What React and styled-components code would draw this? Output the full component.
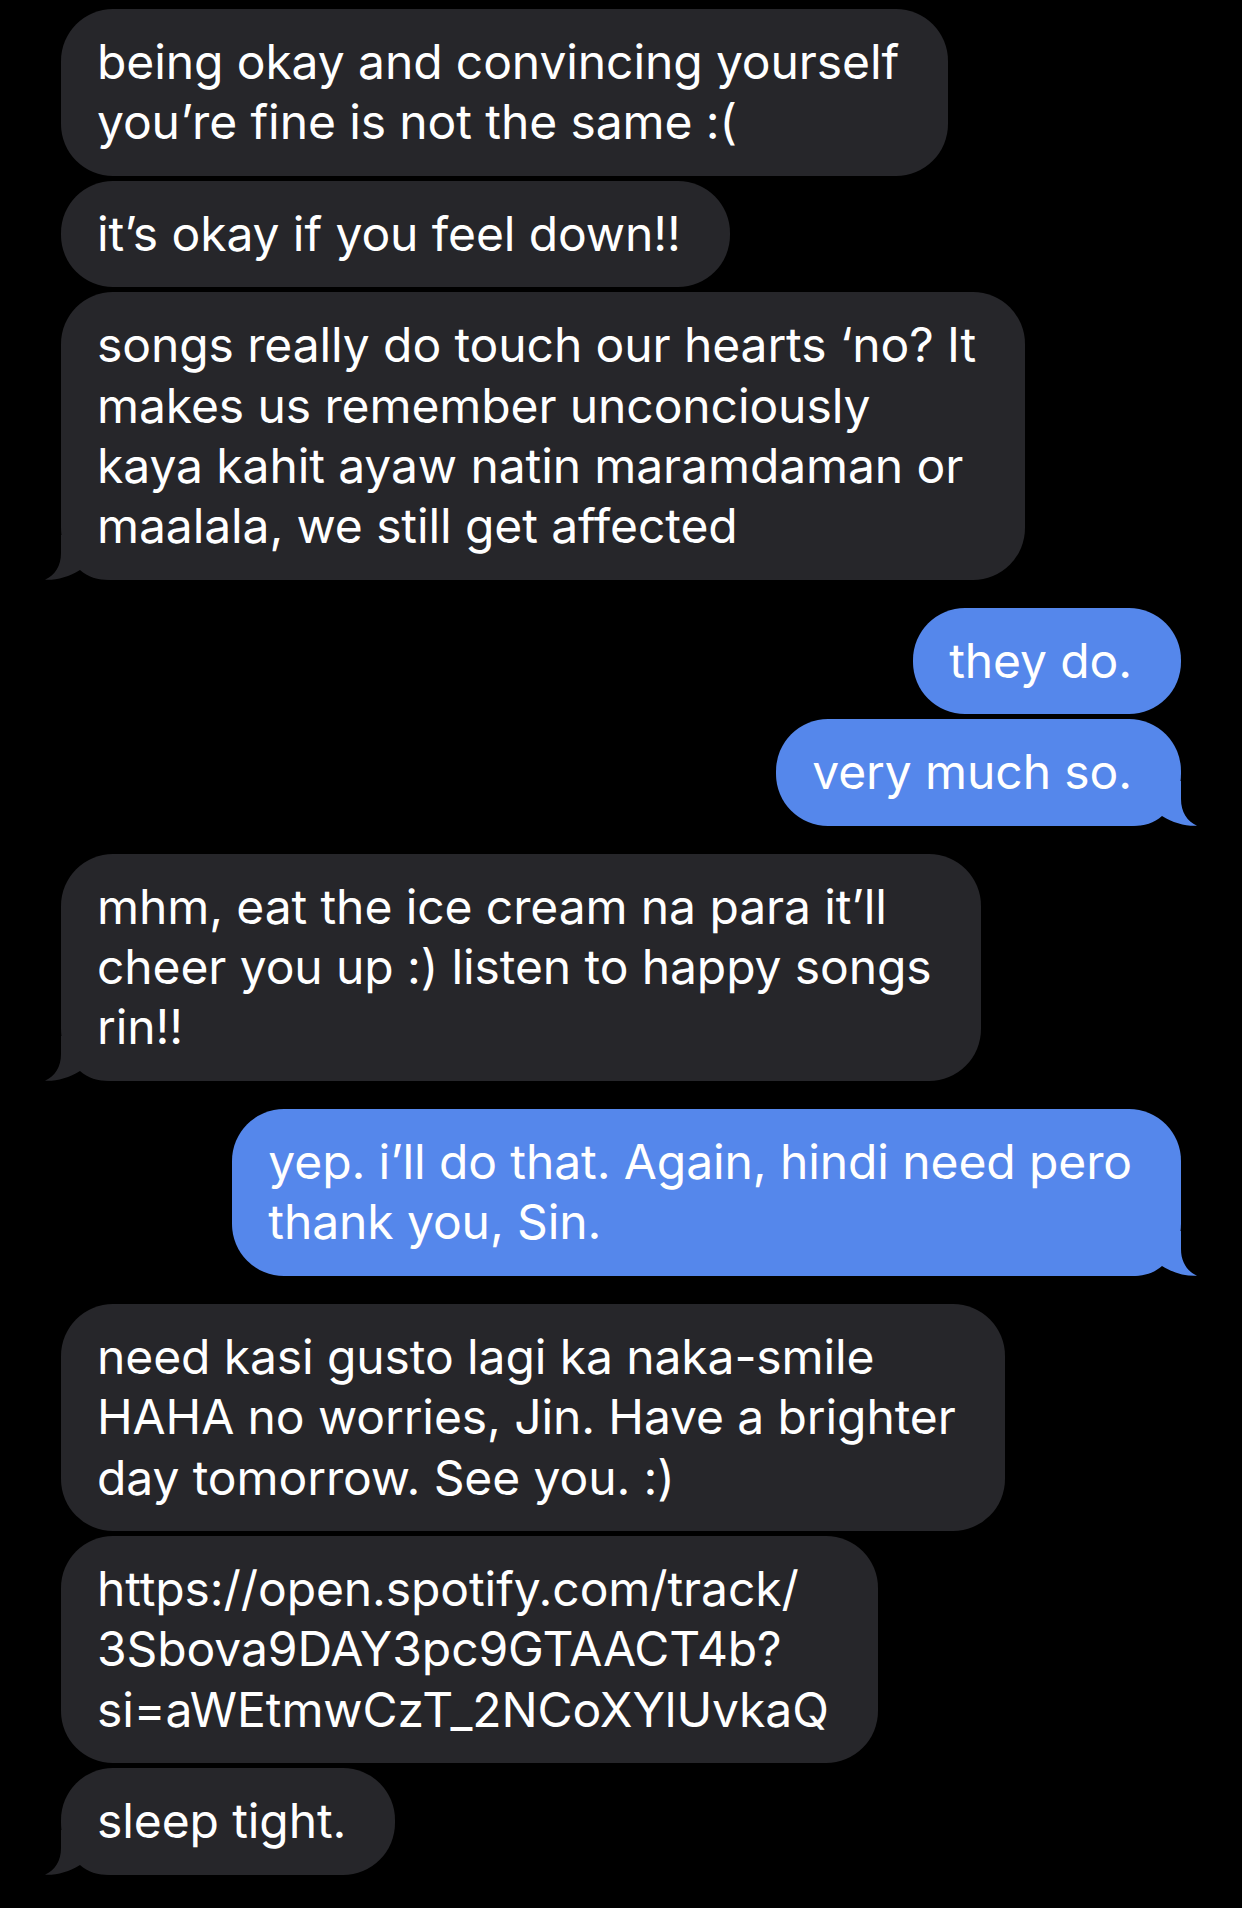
import React from "react";
import styled, { createGlobalStyle } from "styled-components";

const Global = createGlobalStyle`
  html, body { margin: 0; padding: 0; background: #000; }
  body {
    font-family: Inter, "Liberation Sans", sans-serif;
    -webkit-font-smoothing: antialiased;
  }
`;

const GRAY = "#26262a";
const BLUE = "#5587eb";

const Thread = styled.main`
  width: 1242px;
  min-height: 1908px;
  box-sizing: border-box;
  padding: 9px 61px 0;
  display: flex;
  flex-direction: column;
  gap: 28px;
  background: #000;
`;

const Group = styled.section`
  display: flex;
  flex-direction: column;
  gap: 5px;
  align-items: ${(p) => (p.$me ? "flex-end" : "flex-start")};
`;

const Bubble = styled.div`
  position: relative;
  box-sizing: border-box;
  padding: 23px 49px 23px 36px;
  border-radius: 52px;
  background: ${(p) => (p.$me ? BLUE : GRAY)};
  color: #fff;
  font-size: 48px;
  line-height: 60.4px;
  letter-spacing: -0.1px;
  white-space: nowrap;
`;

const Line = styled.span`
  position: relative;
  z-index: 1;
  display: block;
`;

const TailSvg = styled.svg`
  position: absolute;
  z-index: 0;
  bottom: 0;
  width: 70px;
  height: 45px;
  display: block;
  color: ${(p) => (p.$me ? BLUE : GRAY)};
  ${(p) => (p.$me ? "right: -16px; transform: scaleX(-1);" : "left: -16px;")}
`;

function Tail({ me }) {
  return (
    <TailSvg $me={me} viewBox="0 0 70 45" aria-hidden="true">
      <path
        d="M16 0 L16 18 C16 31 10 40 0 44.8 C11 45.4 24 42 35 35 C43 42 52 45 66 45 L70 45 L70 0 Z"
        fill="currentColor"
      />
    </TailSvg>
  );
}

const groups = [
  {
    me: false,
    messages: [
      ["being okay and convincing yourself", "you\u2019re fine is not the same :("],
      ["it\u2019s okay if you feel down!!"],
      [
        "songs really do touch our hearts \u2018no? It",
        "makes us remember unconciously",
        "kaya kahit ayaw natin maramdaman or",
        "maalala, we still get affected",
      ],
    ],
  },
  { me: true, messages: [["they do."], ["very much so."]] },
  {
    me: false,
    messages: [
      [
        "mhm, eat the ice cream na para it\u2019ll",
        "cheer you up :) listen to happy songs",
        "rin!!",
      ],
    ],
  },
  {
    me: true,
    messages: [["yep. i\u2019ll do that. Again, hindi need pero", "thank you, Sin."]],
  },
  {
    me: false,
    messages: [
      [
        "need kasi gusto lagi ka naka-smile",
        "HAHA no worries, Jin. Have a brighter",
        "day tomorrow. See you. :)",
      ],
      [
        "https://open.spotify.com/track/",
        "3Sbova9DAY3pc9GTAACT4b?",
        "si=aWEtmwCzT_2NCoXYlUvkaQ",
      ],
      ["sleep tight."],
    ],
  },
];

export default function App() {
  return (
    <>
      <Global />
      <Thread>
        {groups.map((g, gi) => (
          <Group key={gi} $me={g.me}>
            {g.messages.map((lines, mi) => (
              <Bubble key={mi} $me={g.me}>
                {mi === g.messages.length - 1 && <Tail me={g.me} />}
                {lines.map((l, li) => (
                  <Line key={li}>{l}</Line>
                ))}
              </Bubble>
            ))}
          </Group>
        ))}
      </Thread>
    </>
  );
}
